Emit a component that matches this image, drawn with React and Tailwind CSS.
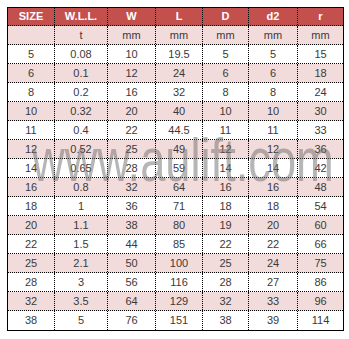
import React from "react";

const widths = ["w-[47px]", "w-[53px]", "w-[48px]", "w-[47px]", "w-[46px]", "w-[49px]", "w-[45px]"];

const header = ["SIZE", "W.L.L.", "W", "L", "D", "d2", "r"];
const units = ["", "t", "mm", "mm", "mm", "mm", "mm"];

const rows = [
    ["5", "0.08", "10", "19.5", "5", "5", "15"],
    ["6", "0.1", "12", "24", "6", "6", "18"],
    ["8", "0.2", "16", "32", "8", "8", "24"],
    ["10", "0.32", "20", "40", "10", "10", "30"],
    ["11", "0.4", "22", "44.5", "11", "11", "33"],
    ["12", "0.52", "25", "49", "12", "12", "36"],
    ["14", "0.65", "28", "59", "14", "14", "42"],
    ["16", "0.8", "32", "64", "16", "16", "48"],
    ["18", "1", "36", "71", "18", "18", "54"],
    ["20", "1.1", "38", "80", "19", "20", "60"],
    ["22", "1.5", "44", "85", "22", "22", "66"],
    ["25", "2.1", "50", "100", "25", "24", "75"],
    ["28", "3", "56", "116", "28", "27", "86"],
    ["32", "3.5", "64", "129", "32", "33", "96"],
    ["38", "5", "76", "151", "38", "39", "114"],
];

const Row = ({ cells, bg, last, head }) => (
    <div className={`flex ${head ? "h-[18px]" : "h-[19px]"} ${bg} ${last ? "" : "border-b border-dotted border-black"}`}>
        {cells.map((c, i) => (
            <div
                key={i}
                className={`${widths[i]} flex items-center justify-center ${i < 6 ? "border-r border-dotted border-black" : ""} ${head ? "text-white font-bold" : "text-[#3a3a3a]"}`}
            >
                {c}
            </div>
        ))}
    </div>
);

export default function App() {
    return (
        <div className="w-[349px] h-[339px] bg-white pt-[7px] pl-[7px]" style={{ fontFamily: "'Liberation Sans', Arial, sans-serif" }}>
            <div className="relative w-[337px] border border-black text-[11px] leading-none">
                <Row cells={header} bg="bg-[#c4504e]" head />
                <Row cells={units} bg="bg-[#f2dcdb]" />
                {rows.map((r, i) => (
                    <Row key={i} cells={r} bg={i % 2 === 0 ? "bg-white" : "bg-[#f2dcdb]"} last={i === rows.length - 1} />
                ))}

                {/* watermark */}
                <div className="absolute left-[24px] top-[121px] text-[62px] leading-none text-[rgba(110,110,110,0.5)] origin-left scale-x-[0.73] whitespace-nowrap pointer-events-none">
                    www.aulift.com
                </div>
            </div>
        </div>
    );
}
